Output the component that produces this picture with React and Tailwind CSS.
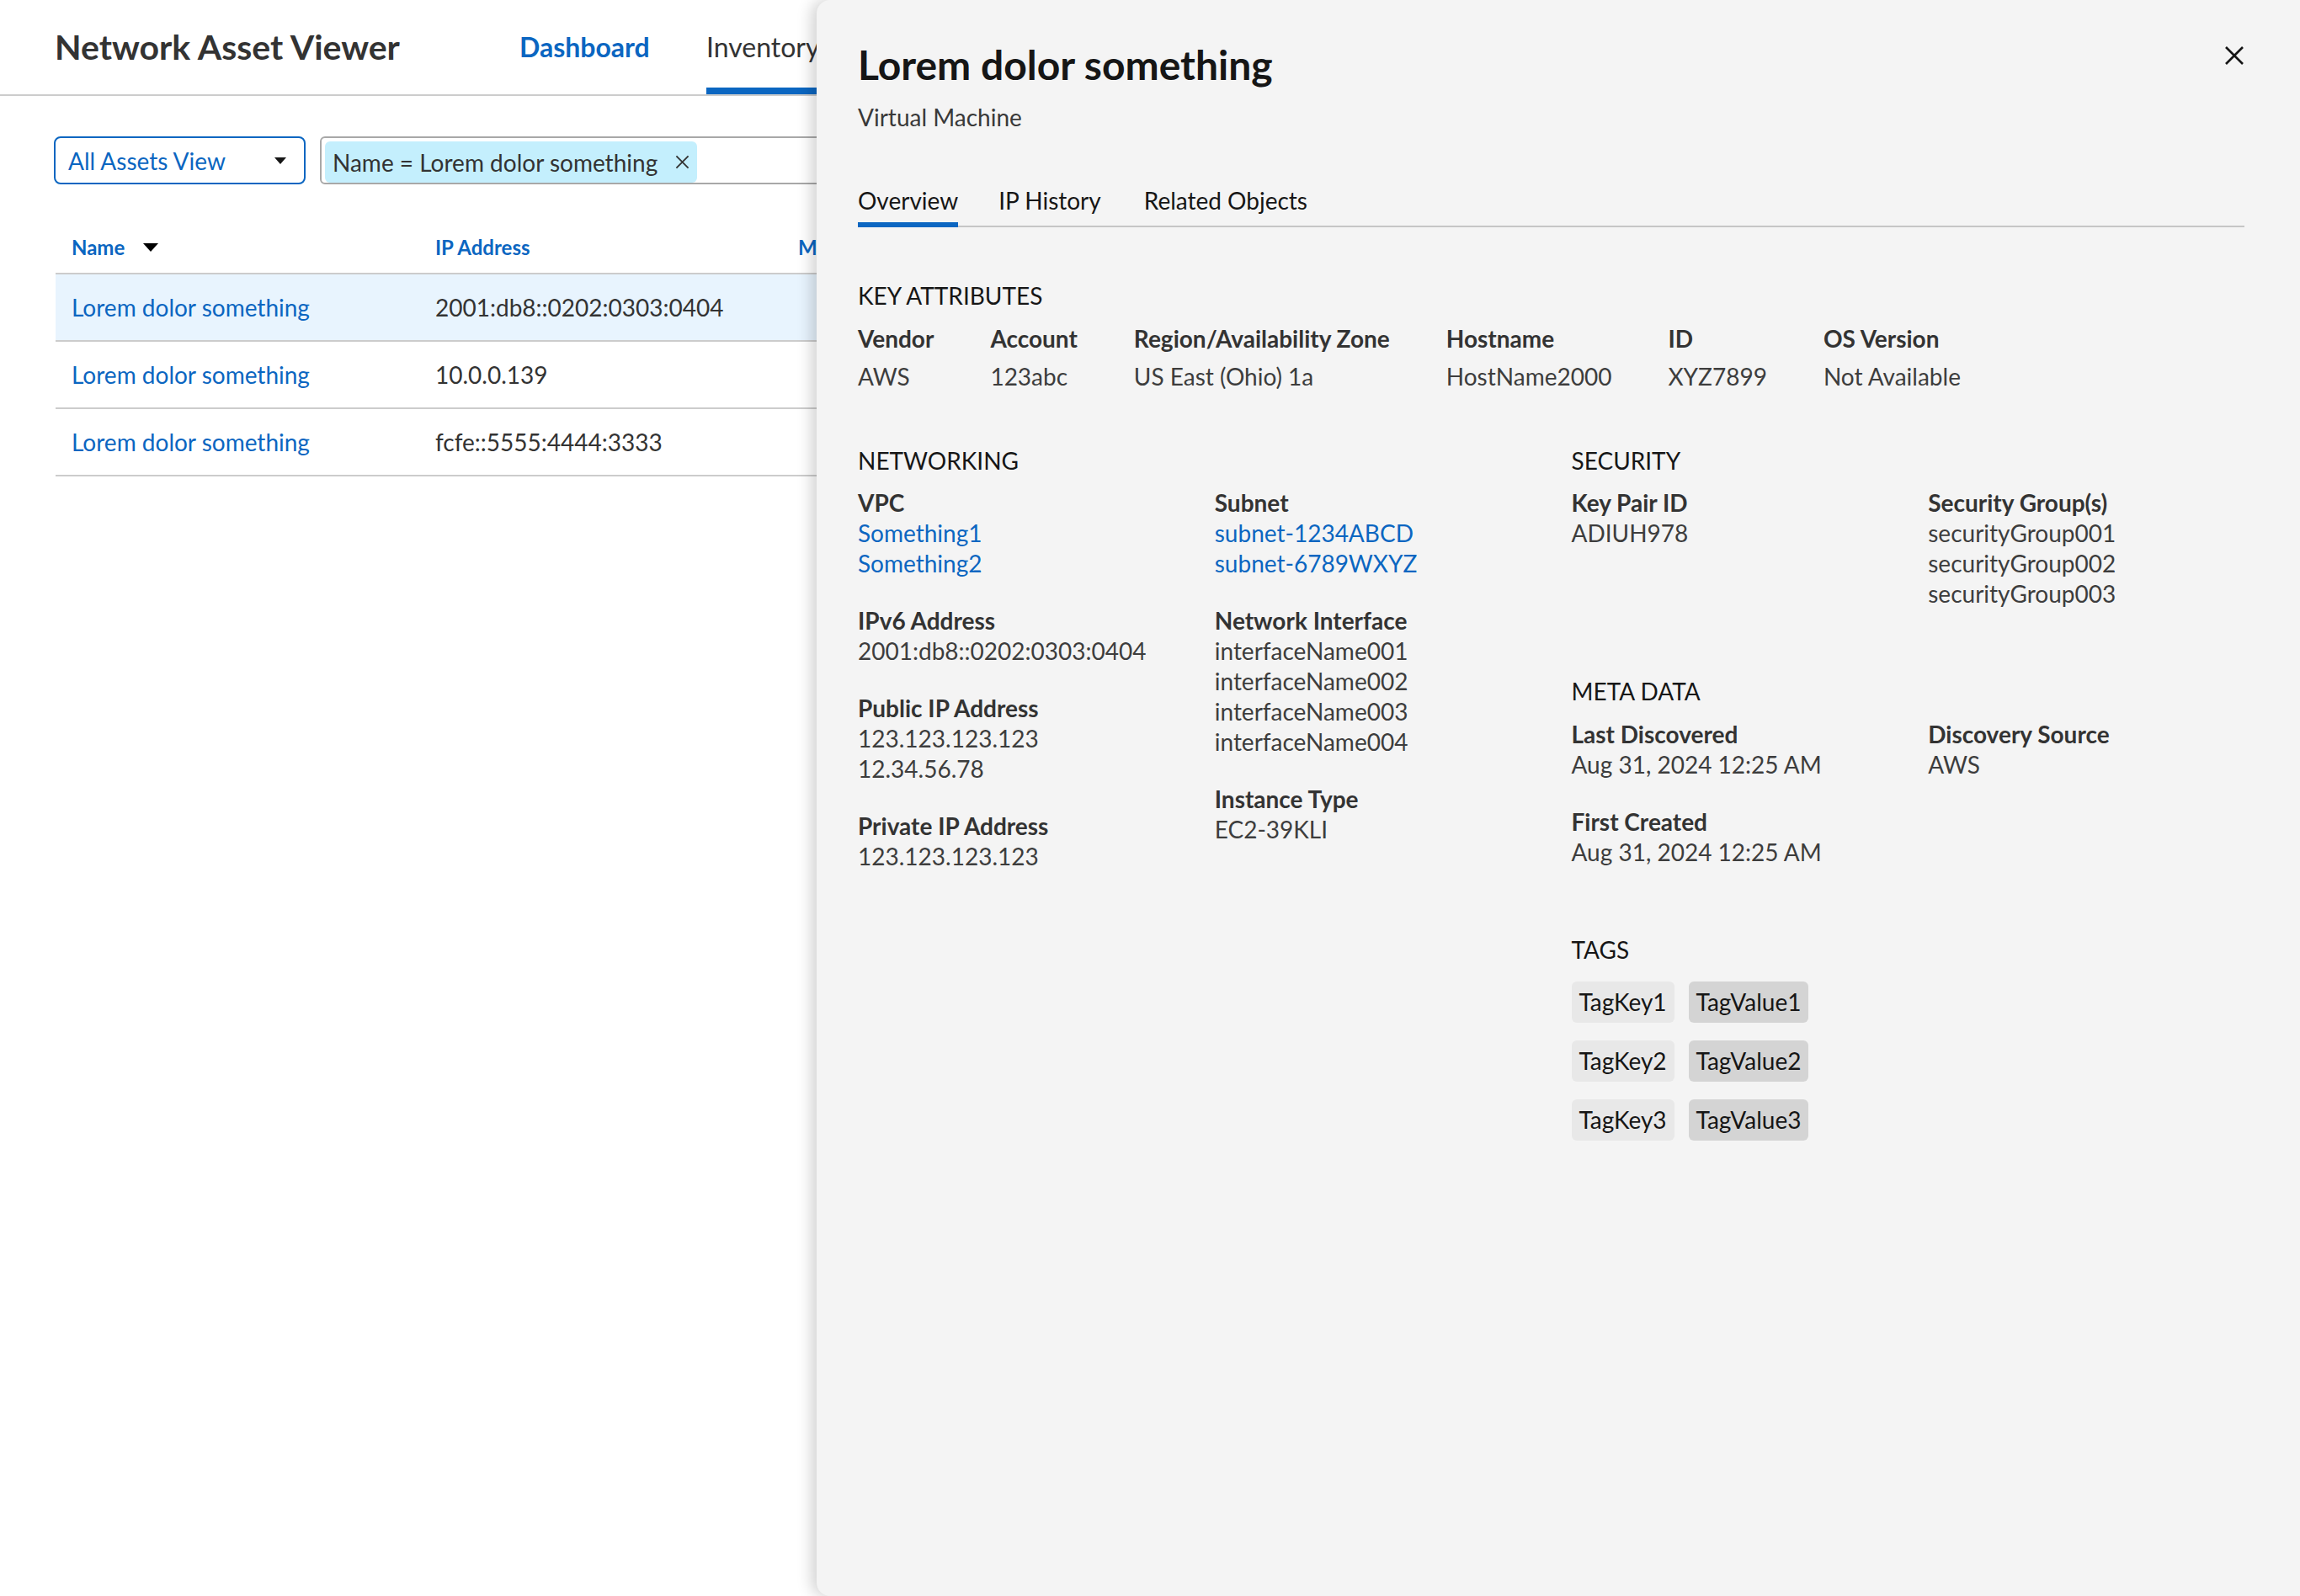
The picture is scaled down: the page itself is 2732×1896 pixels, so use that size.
import React from "react";

const BLUE = "text-[#0b66c1]";

function Caret({ className }) {
  return (
    <svg className={className} viewBox="0 0 14 8" width="14" height="8">
      <path d="M0 0 L14 0 L7 8 Z" fill="#161616" />
    </svg>
  );
}

function XIcon({ size, stroke, color }) {
  return (
    <svg width={size} height={size} viewBox="0 0 24 24">
      <path d="M2 2 L22 22 M22 2 L2 22" stroke={color} strokeWidth={stroke} strokeLinecap="butt" fill="none" />
    </svg>
  );
}

function Field({ label, values, link }) {
  return (
    <div className="flex flex-col">
      <div className="text-[28px] font-bold leading-[36px] text-[#333333]">{label}</div>
      {values.map((v) => (
        <div
          key={v}
          className={
            "text-[28px] leading-[36px] " + (link ? "text-[#0b66c1]" : "text-[#3d3d3d]")
          }
        >
          {v}
        </div>
      ))}
    </div>
  );
}

function Heading({ children, className = "" }) {
  return (
    <div className={"text-[28px] leading-[36px] text-[#161616] " + className}>{children}</div>
  );
}

function KeyAttr({ label, value }) {
  return (
    <div className="flex flex-col">
      <div className="text-[28px] font-bold leading-[36px] text-[#333333]">{label}</div>
      <div className="mt-[9px] text-[28px] leading-[36px] text-[#3d3d3d]">{value}</div>
    </div>
  );
}

function Tag({ k, v }) {
  return (
    <div className="flex gap-[17px]">
      <div className="flex h-[49px] items-center rounded-[6px] bg-[#e8e8e8] px-[9px] text-[28px] leading-[36px] text-[#161616]">
        {k}
      </div>
      <div className="flex h-[49px] items-center rounded-[6px] bg-[#d4d4d4] px-[9px] text-[28px] leading-[36px] text-[#161616]">
        {v}
      </div>
    </div>
  );
}

const rows = [
  { name: "Lorem dolor something", ip: "2001:db8::0202:0303:0404", selected: true },
  { name: "Lorem dolor something", ip: "10.0.0.139" },
  { name: "Lorem dolor something", ip: "fcfe::5555:4444:3333" },
];

export default function App() {
  return (
    <div className="relative h-screen w-full overflow-hidden bg-white font-['Lato',sans-serif]">
      {/* Header */}
      <header className="flex h-[114px] items-stretch border-b-2 border-[#cccccc] pl-[65px]">
        <div className="flex w-[552px] items-center text-[41px] font-bold text-[#333333]">
          Network Asset Viewer
        </div>
        <nav className="flex items-stretch">
          <a className={"flex w-[222px] items-center text-[32px] font-bold " + BLUE}>Dashboard</a>
          <a className="relative flex items-center text-[32px] text-[#333333]">
            Inventory
            <span className="absolute bottom-0 left-0 right-[-20px] h-[8px] bg-[#0b66c1]" />
          </a>
        </nav>
      </header>

      {/* Toolbar */}
      <div className="mt-[48px] flex gap-[17px] pl-[64px] pr-[66px]">
        <div className="flex h-[57px] w-[299px] items-center justify-between rounded-[8px] border-2 border-[#0b66c1] pl-[15px] pr-[21px]">
          <span className={"text-[28px] leading-[36px] " + BLUE}>All Assets View</span>
          <Caret />
        </div>
        <div className="flex h-[57px] flex-1 items-end rounded-[6px] border-2 border-[#a8a8a8] pb-0 pl-[4px]">
          <div className="flex h-[49px] items-center gap-[21px] rounded-[6px] bg-[#c4effd] pl-[9px] pr-[9px]">
            <span className="text-[28px] leading-[36px] text-[#333333]">Name = Lorem dolor something</span>
            <XIcon size={17} stroke={2.6} color="#333333" />
          </div>
        </div>
      </div>

      {/* Table */}
      <div className="ml-[66px] mt-[45px] mr-[66px]">
        <div className="grid h-[62px] grid-cols-[432px_431px_431px_1fr] items-center border-b-2 border-[#cccccc] text-[24px] font-bold text-[#0b66c1]">
          <div className="flex items-center gap-[22px] pl-[19px]">
            <span>Name</span>
            <svg width="18" height="10" viewBox="0 0 18 10">
              <path d="M0 0 L18 0 L9 10 Z" fill="#000000" />
            </svg>
          </div>
          <div className="pl-[19px]">IP Address</div>
          <div className="pl-[19px]">MAC Address</div>
          <div />
        </div>
        {rows.map((r, i) => (
          <div
            key={i}
            className={
              "grid h-[80px] grid-cols-[432px_431px_431px_1fr] items-center border-b-2 border-[#cccccc] text-[28px] " +
              (r.selected ? "bg-[#e8f4fe]" : "bg-white")
            }
          >
            <div className={"pl-[19px] " + BLUE}>{r.name}</div>
            <div className="pl-[19px] text-[#333333]">{r.ip}</div>
            <div />
            <div />
          </div>
        ))}
      </div>

      {/* Drawer */}
      <aside className="absolute bottom-0 left-[970px] right-0 top-0 rounded-l-[16px] bg-[#f4f4f4] pl-[49px] pr-[66px] pt-[48px] shadow-[-6px_0_18px_rgba(0,0,0,0.18)]">
        <div className="flex items-start justify-between">
          <h1 className="text-[48px] font-bold leading-[57.6px] text-[#161616]">Lorem dolor something</h1>
          <button className="mt-[6px] flex h-[24px] w-[24px] items-center justify-center">
            <XIcon size={24} stroke={2.6} color="#161616" />
          </button>
        </div>
        <div className="mt-[15px] text-[28px] leading-[36px] text-[#393939]">Virtual Machine</div>

        {/* Tabs */}
        <div className="mt-[63px] flex gap-[48px] border-b-2 border-[#c6c6c6]">
          <div className="relative pb-[12px] text-[28px] leading-[36px] text-[#161616]">
            Overview
            <span className="absolute bottom-[-2px] left-0 right-0 h-[6px] bg-[#0b66c1]" />
          </div>
          <div className="pb-[12px] pr-[3px] text-[28px] leading-[36px] text-[#161616]">IP History</div>
          <div className="pb-[12px] text-[28px] leading-[36px] text-[#161616]">Related Objects</div>
        </div>

        {/* Key attributes */}
        <Heading className="mt-[63px]">KEY ATTRIBUTES</Heading>
        <div className="mt-[15px] flex gap-[67px]">
          <KeyAttr label="Vendor" value="AWS" />
          <KeyAttr label="Account" value="123abc" />
          <KeyAttr label="Region/Availability Zone" value="US East (Ohio) 1a" />
          <KeyAttr label="Hostname" value="HostName2000" />
          <KeyAttr label="ID" value="XYZ7899" />
          <KeyAttr label="OS Version" value="Not Available" />
        </div>

        <div className="mt-[64px] grid grid-cols-2 gap-x-[48px]">
          {/* Networking */}
          <div className="flex flex-col">
            <Heading>NETWORKING</Heading>
            <div className="mt-[14px] grid grid-cols-2 gap-x-[48px]">
              <div className="flex flex-col gap-[32px]">
                <Field label="VPC" values={["Something1", "Something2"]} link />
                <Field label="IPv6 Address" values={["2001:db8::0202:0303:0404"]} />
                <Field label="Public IP Address" values={["123.123.123.123", "12.34.56.78"]} />
                <Field label="Private IP Address" values={["123.123.123.123"]} />
              </div>
              <div className="flex flex-col gap-[32px]">
                <Field label="Subnet" values={["subnet-1234ABCD", "subnet-6789WXYZ"]} link />
                <Field
                  label="Network Interface"
                  values={["interfaceName001", "interfaceName002", "interfaceName003", "interfaceName004"]}
                />
                <Field label="Instance Type" values={["EC2-39KLI"]} />
              </div>
            </div>
          </div>

          {/* Security / Meta / Tags */}
          <div className="flex flex-col">
            <Heading>SECURITY</Heading>
            <div className="mt-[14px] grid grid-cols-2 gap-x-[48px]">
              <Field label="Key Pair ID" values={["ADIUH978"]} />
              <Field
                label="Security Group(s)"
                values={["securityGroup001", "securityGroup002", "securityGroup003"]}
              />
            </div>

            <Heading className="mt-[80px]">META DATA</Heading>
            <div className="mt-[15px] grid grid-cols-2 gap-x-[48px] gap-y-[32px]">
              <Field label="Last Discovered" values={["Aug 31, 2024 12:25 AM"]} />
              <Field label="Discovery Source" values={["AWS"]} />
              <Field label="First Created" values={["Aug 31, 2024 12:25 AM"]} />
            </div>

            <Heading className="mt-[80px]">TAGS</Heading>
            <div className="mt-[20px] flex flex-col gap-[21px]">
              <Tag k="TagKey1" v="TagValue1" />
              <Tag k="TagKey2" v="TagValue2" />
              <Tag k="TagKey3" v="TagValue3" />
            </div>
          </div>
        </div>
      </aside>
    </div>
  );
}
